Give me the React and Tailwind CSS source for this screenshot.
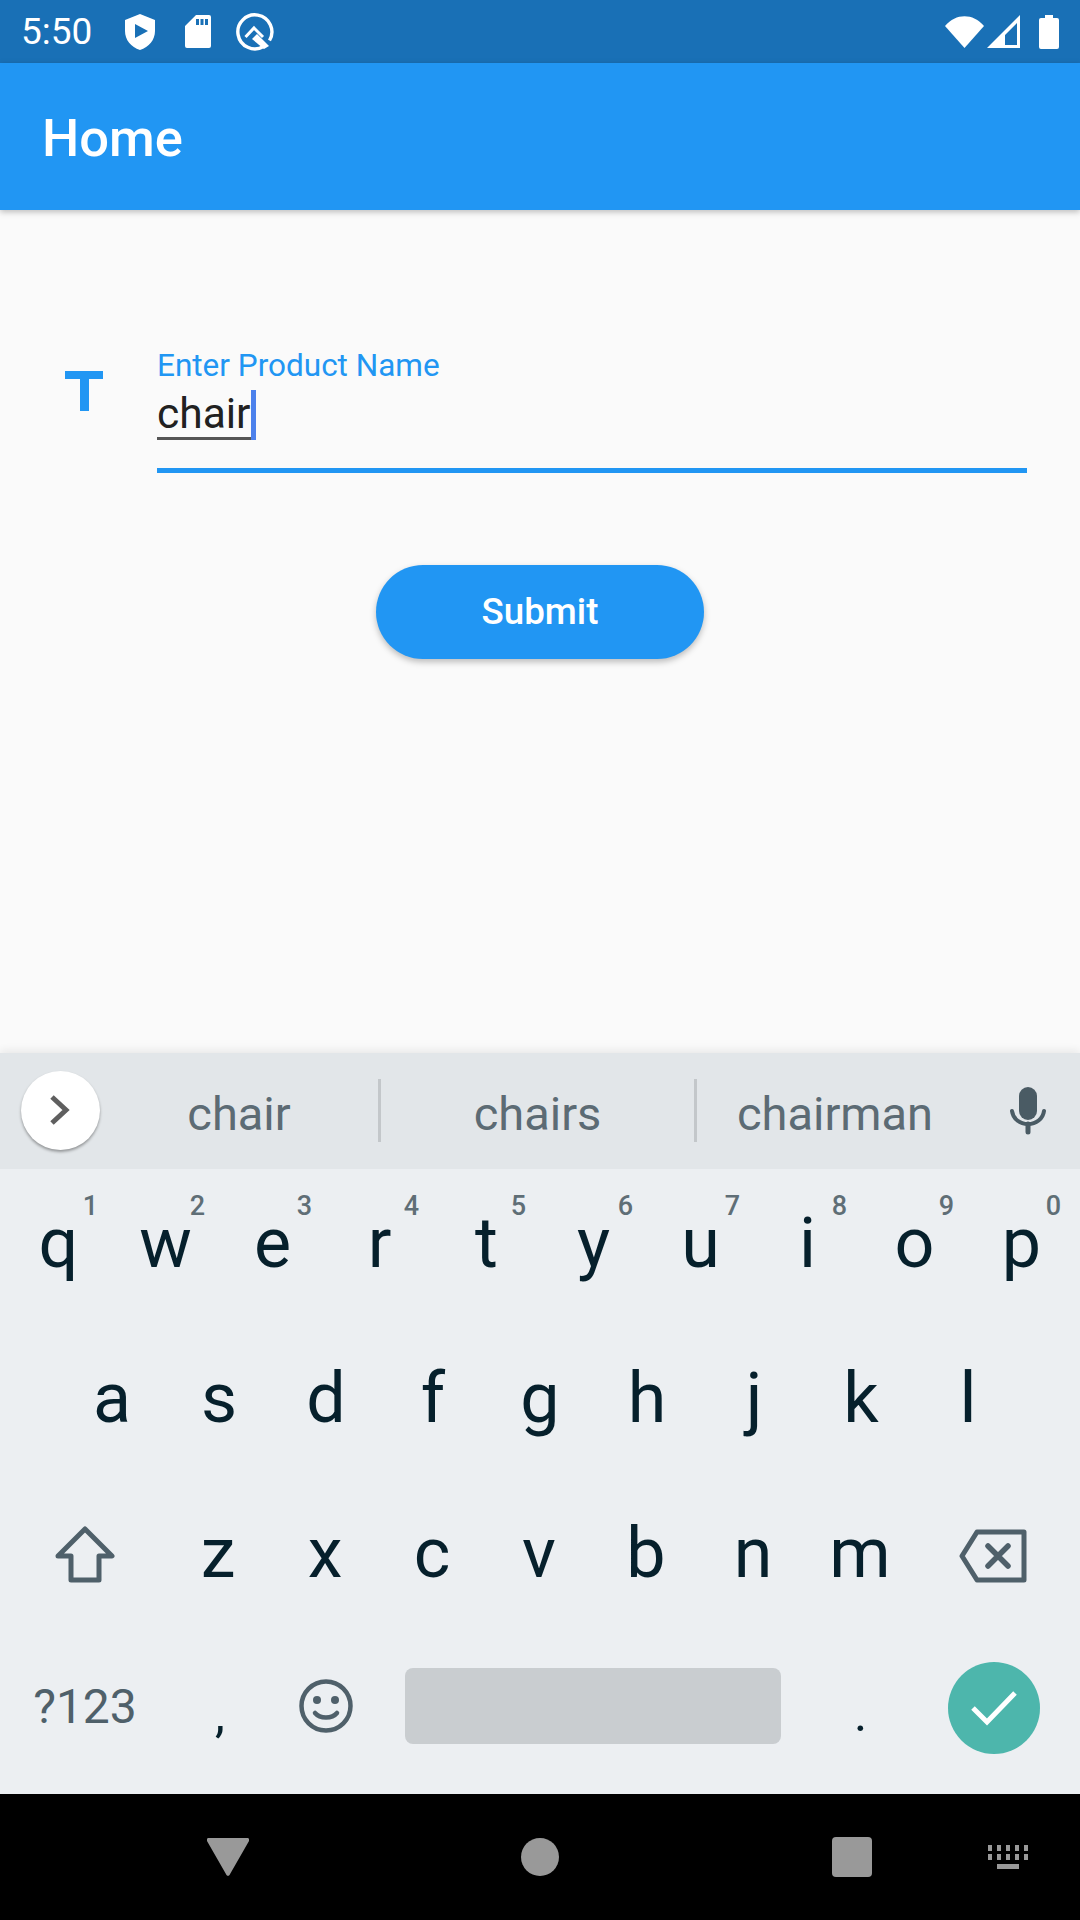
const rows = [
  [["q","1"],["w","2"],["e","3"],["r","4"],["t","5"],["y","6"],["u","7"],["i","8"],["o","9"],["p","0"]],
  [["a"],["s"],["d"],["f"],["g"],["h"],["j"],["k"],["l"]],
  [["z"],["x"],["c"],["v"],["b"],["n"],["m"]],
];

function Key({ k, d }) {
  return (
    <div className="relative w-[107px] h-[156px] flex items-center justify-center text-[70px] leading-none text-[#06202c]">
      <span className="-mt-[9px]">{k}</span>
      {d && <span className="absolute top-[21px] right-[14px] text-[27px] leading-[32px] font-medium text-[#5f6e76]">{d}</span>}
    </div>
  );
}

export default function App() {
  return (
    <div className="w-[1080px] h-[1920px] flex flex-col overflow-hidden bg-[#fafafa] font-['Roboto',sans-serif]">
      {/* status bar */}
      <div className="h-[63px] shrink-0 bg-[#1970b6] flex items-center text-white pl-[21px]">
        <span className="w-[70px] text-[37px] leading-none">5:50</span>
        <svg className="ml-[34px]" width="30" height="36" viewBox="0 0 30 36">
          <path fill="#fff" fillRule="evenodd" d="M15 0 L30 6 V17 C30 26 24 33 15 36 C6 33 0 26 0 17 V6 Z M10 10 V24 L23 17 Z" />
        </svg>
        <svg className="ml-[30px]" width="26" height="33" viewBox="0 0 26 33">
          <path fill="#fff" fillRule="evenodd" d="M11 0 H24 A2 2 0 0 1 26 2 V31 A2 2 0 0 1 24 33 H2 A2 2 0 0 1 0 31 V11 Z M11 4 V10 H14 V4 Z M15.5 4 V10 H18.5 V4 Z M20 4 V10 H23 V4 Z" />
        </svg>
        <svg className="ml-[25px]" width="38" height="38" viewBox="0 0 38 38">
          <path fill="none" stroke="#fff" strokeWidth="3.4" d="M27.5 33.5 A17 17 0 1 1 33.5 27.5" />
          <path fill="none" stroke="#fff" strokeWidth="3" d="M9.5 24 L18 15 L27 24" />
          <path fill="#fff" d="M16 26 L21 21 L33 33 L28 36 Z" />
        </svg>
        <svg className="ml-auto" width="39" height="32" viewBox="0 0 39 32">
          <path fill="#fff" d="M0 10 C11 -3 28 -3 39 10 L19.5 32 Z" />
        </svg>
        <svg className="ml-[3px]" width="33" height="33" viewBox="0 0 33 33">
          <path fill="#fff" fillRule="evenodd" d="M33 0 V33 H0 Z M30 8 L18 20 V30 H30 Z" />
        </svg>
        <svg className="ml-[19px] mr-[21px]" width="20" height="34" viewBox="0 0 20 34">
          <path fill="#fff" d="M6 0 H14 V3 H18 A2 2 0 0 1 20 5 V32 A2 2 0 0 1 18 34 H2 A2 2 0 0 1 0 32 V5 A2 2 0 0 1 2 3 H6 Z" />
        </svg>
      </div>

      {/* app bar */}
      <div className="relative z-10 h-[147px] shrink-0 bg-[#2196f3] flex items-center pl-[42px] shadow-[0_2px_6px_rgba(0,0,0,0.25)]">
        <span className="text-[52.5px] leading-none font-medium text-white mt-[4px]">Home</span>
      </div>

      {/* body */}
      <div className="flex-1 flex flex-col">
        <div className="flex pt-[138px] pl-[65px] pr-[53px]">
          <svg className="mt-[23px] shrink-0" width="38" height="40" viewBox="0 0 38 40">
            <path fill="#2196f3" d="M0 0 H38 V8 H24 V40 H15 V8 H0 Z" />
          </svg>
          <div className="ml-[54px] flex-1 flex flex-col">
            <div className="text-[31.5px] leading-[36px] text-[#2196f3]">Enter Product Name</div>
            <div className="h-[84px] flex items-start pt-[6px]">
              <span className="text-[42.5px] leading-[47px] text-[#212121] border-b-[3px] border-[#555]">chair</span>
              <span className="w-[5px] h-[50px] bg-[#4c81ec]"></span>
            </div>
            <div className="h-[5px] bg-[#2196f3]"></div>
          </div>
        </div>
        <button className="self-center mt-[92px] w-[328px] h-[94px] rounded-full bg-[#2196f3] text-white text-[36.75px] font-medium shadow-[0_3px_6px_rgba(0,0,0,0.25)]">
          Submit
        </button>
      </div>

      {/* keyboard */}
      <div className="relative shrink-0 h-[741px] bg-[#eceff2] shadow-[0_-3px_8px_rgba(0,0,0,0.07)]">
        <div className="h-[116px] bg-[#e2e6e9] flex items-center pl-[21px]">
          <div className="w-[79px] h-[79px] -mt-[2px] rounded-full bg-white flex items-center justify-center shadow-[0_2px_3px_rgba(0,0,0,0.35)]">
            <svg className="-ml-[2px]" width="20" height="30" viewBox="0 0 20 30">
              <path fill="none" stroke="#5f5f5f" strokeWidth="5" d="M2 2 L16 15 L2 28" />
            </svg>
          </div>
          <div className="w-[278px] text-center text-[47px] leading-none text-[#5c6b74] mt-[4px]">chair</div>
          <div className="w-[3px] h-[63px] -mt-[2px] bg-[#c3c7ca]"></div>
          <div className="w-[313px] text-center text-[47px] leading-none text-[#5c6b74] mt-[4px]">chairs</div>
          <div className="w-[3px] h-[63px] -mt-[2px] bg-[#c3c7ca]"></div>
          <div className="w-[276px] text-center text-[47px] leading-none text-[#5c6b74] mt-[4px]">chairman</div>
          <svg className="ml-[37px] -mt-[1px]" width="36" height="48" viewBox="0 0 36 48">
            <rect x="9" y="0" width="18" height="33" rx="9" fill="#4a5b64" />
            <path fill="none" stroke="#4a5b64" strokeWidth="4" strokeLinecap="round" d="M2 24 C3 32 10 37 18 37 C26 37 33 32 34 24" />
            <path fill="none" stroke="#4a5b64" strokeWidth="5" strokeLinecap="round" d="M18 37 V45" />
          </svg>
        </div>

        <div className="flex px-[5px]">
          {rows[0].map(([k, d]) => <Key key={k} k={k} d={d} />)}
        </div>
        <div className="flex justify-center -mt-[1px]">
          {rows[1].map(([k]) => <Key key={k} k={k} />)}
        </div>
        <div className="flex px-[5px] -mt-[1px]">
          <div className="w-[159.5px] h-[156px] flex items-center justify-center">
            <svg className="-mt-[4px]" width="60" height="58" viewBox="0 0 60 58">
              <path fill="none" stroke="#4f606a" strokeWidth="5" strokeLinejoin="round" d="M30 3 L57 30 H44 V54 H16 V30 H3 Z" />
            </svg>
          </div>
          {rows[2].map(([k]) => <Key key={k} k={k} />)}
          <div className="w-[161.5px] h-[156px] flex items-center justify-center pr-[2px]">
            <svg className="-mt-[2px]" width="68" height="54" viewBox="0 0 68 54">
              <path fill="none" stroke="#4f606a" strokeWidth="5" strokeLinejoin="round" d="M18 3 H65 V51 H18 L3 27 Z" />
              <path fill="none" stroke="#4f606a" strokeWidth="5.5" strokeLinecap="round" d="M29 17 L49 37 M49 17 L29 37" />
            </svg>
          </div>
        </div>
        <div className="flex px-[5px] h-[156px] items-center mt-[2px]">
          <div className="w-[160px] text-center text-[48px] leading-none text-[#4f606a] -mt-[16px]">?123</div>
          <div className="w-[107px] text-center text-[50px] leading-none text-[#06202c] pl-[3px] -mt-[2px]">,</div>
          <div className="w-[107px] flex justify-center -mt-[18px]">
            <svg width="54" height="54" viewBox="0 0 54 54">
              <circle cx="27" cy="27" r="24.5" fill="none" stroke="#4f606a" strokeWidth="4.5" />
              <circle cx="18" cy="21" r="4" fill="#4f606a" />
              <circle cx="36" cy="21" r="4" fill="#4f606a" />
              <path fill="none" stroke="#4f606a" strokeWidth="4.5" strokeLinecap="round" d="M16 34 C21 40 33 40 38 34" />
            </svg>
          </div>
          <div className="w-[428px] flex justify-center -mt-[18px]">
            <div className="w-[376px] h-[76px] rounded-[8px] bg-[#c9cdd0]"></div>
          </div>
          <div className="w-[107px] text-center text-[50px] leading-none text-[#06202c] -mt-[2px]">.</div>
          <div className="w-[159px] flex justify-center -mt-[14px]">
            <div className="w-[92px] h-[92px] rounded-full bg-[#4db6ac] flex items-center justify-center">
              <svg width="46" height="36" viewBox="0 0 46 36">
                <path fill="none" stroke="#fff" strokeWidth="5" d="M2 18 L16 32 L44 3" />
              </svg>
            </div>
          </div>
        </div>
      </div>

      {/* nav bar */}
      <div className="h-[126px] shrink-0 bg-black flex items-center pl-[207px]">
        <svg width="42" height="38" viewBox="0 0 42 38">
          <path fill="#999" d="M2 0 H40 A2 2 0 0 1 42 3 L22.5 37 A2 2 0 0 1 19.5 37 L0 3 A2 2 0 0 1 2 0 Z" />
        </svg>
        <div className="ml-[272px] w-[38px] h-[38px] rounded-full bg-[#999]"></div>
        <div className="ml-[273px] w-[40px] h-[40px] rounded-[4px] bg-[#999]"></div>
        <svg className="ml-[116px]" width="40" height="24" viewBox="0 0 40 24">
          <g fill="#999">
            <rect x="0" y="0" width="4" height="6" /><rect x="9" y="0" width="4" height="6" /><rect x="18" y="0" width="4" height="6" /><rect x="27" y="0" width="4" height="6" /><rect x="36" y="0" width="4" height="6" />
            <rect x="0" y="9" width="4" height="6" /><rect x="9" y="9" width="4" height="6" /><rect x="18" y="9" width="4" height="6" /><rect x="27" y="9" width="4" height="6" /><rect x="36" y="9" width="4" height="6" />
            <rect x="9" y="19" width="22" height="5" />
          </g>
        </svg>
      </div>
    </div>
  );
}
